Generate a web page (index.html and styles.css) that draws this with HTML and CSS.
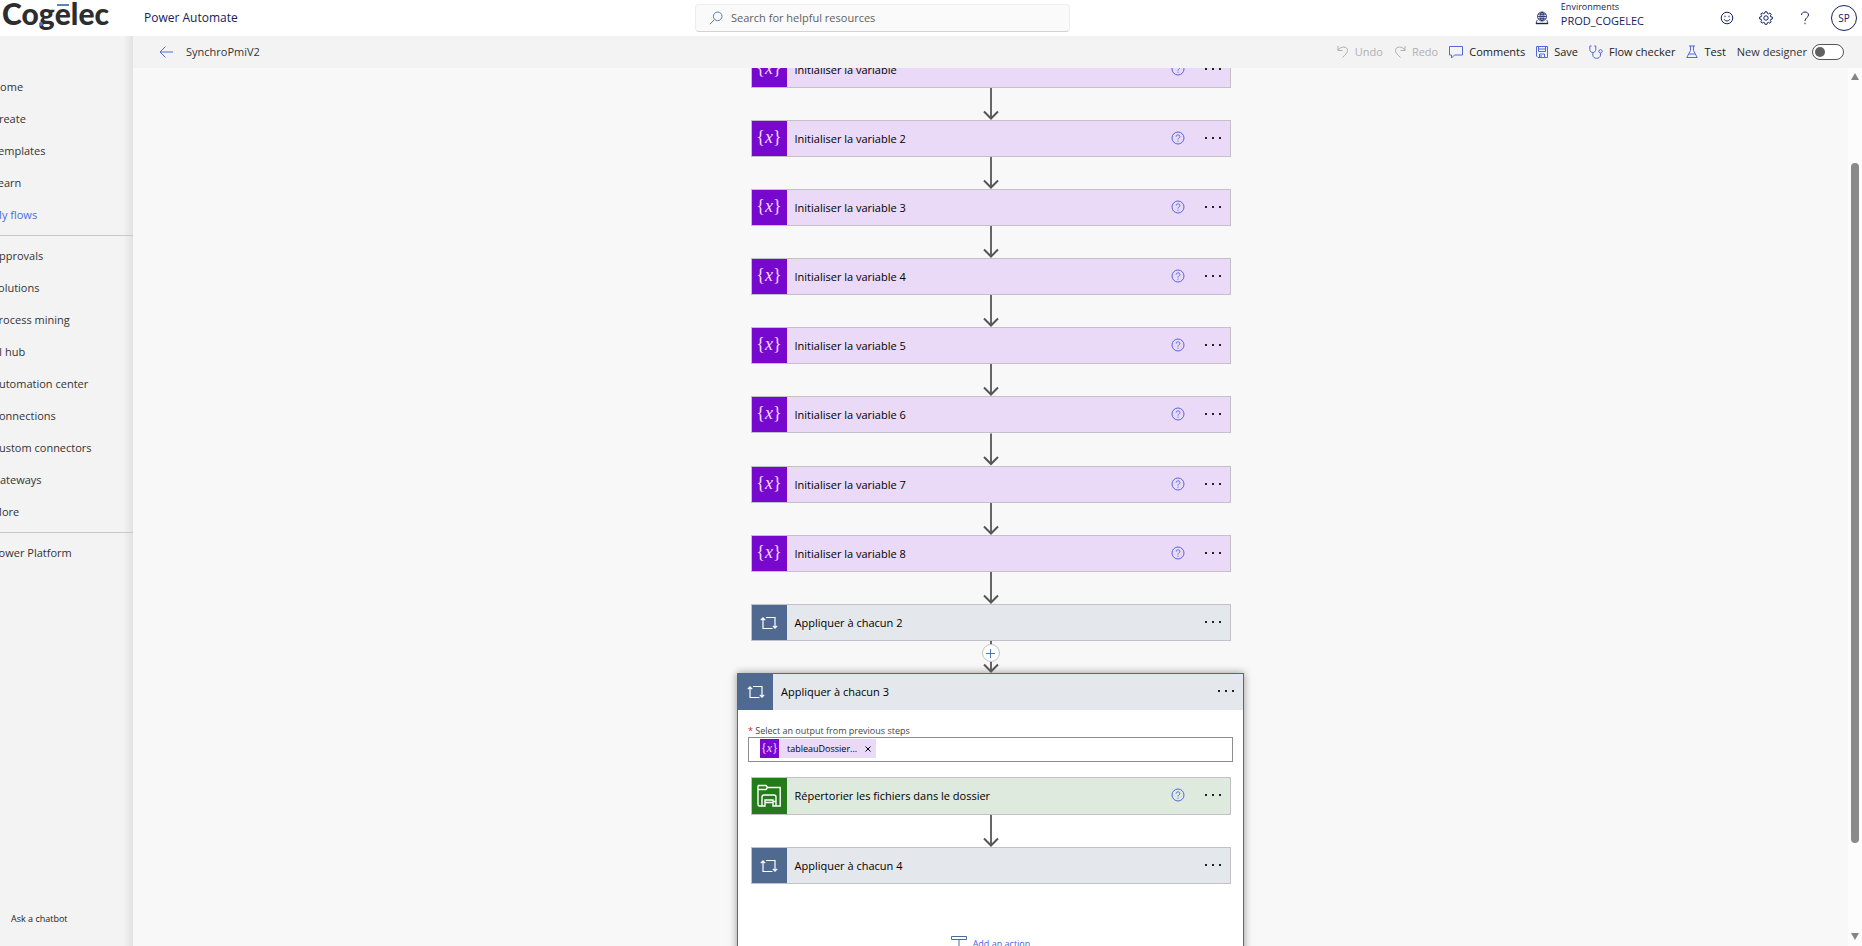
FILE: index.html
```html
<!DOCTYPE html>
<html lang="fr">
<head>
<meta charset="utf-8">
<title>SynchroPmiV2 | Power Automate</title>
<link rel="stylesheet" href="styles.css">
</head>
<body>
<svg class="sprite" aria-hidden="true">
  <symbol id="i-arrow" viewBox="0 0 16 32"><path d="M8 0V30" stroke="#666" stroke-width="2"/><path d="M1 23.500L8 30.500L15 23.500" fill="none" stroke="#555" stroke-width="2"/></symbol>
  <symbol id="i-help" viewBox="0 0 14 14"><circle cx="7" cy="7" r="6"/><path d="M5.200 5.600c0-2.400 3.700-2.300 3.700 0 0 1.200-1.900 1.300-1.900 2.900M7 9.700v1"/></symbol>
  <symbol id="i-dots" viewBox="0 0 18 4"><path d="M1 1h2v2H1zM8 1h2v2H8zM15 1h2v2h-2z"/></symbol>
  <symbol id="i-loop" viewBox="0 0 18 14"><path d="M3 2.500V12.500H12.500M6 1.500H15V12M.8 4.200L3 1.800L5.200 4.200M12.800 9.800L15 12.200L17.200 9.800"/></symbol>
</svg>

<header class="top">
  <div class="brand">
    <a class="logo" href="#" aria-label="Cogelec">Co<span class="logo-g">g</span><span class="logo-e">e</span>lec</a>
    <a class="product" href="#">Power Automate</a>
  </div>
  <label class="search">
    <svg width="14" height="14" viewBox="0 0 14 14"><path d="M5.200 8.800L1 13.200"/><circle cx="8.700" cy="5.300" r="4.300"/></svg>
    <input type="search" placeholder="Search for helpful resources" aria-label="Search for helpful resources">
  </label>
  <div class="account">
    <button class="env">
      <svg width="14" height="14" viewBox="0 0 14 14" stroke-width=".8"><circle cx="7" cy="5.500" r="4.500"/><ellipse cx="7" cy="5.500" rx="2" ry="4.500"/><path d="M2.500 5.500h9M7 1v9M3 3.200h8M3 7.800h8M2.200 9L1 12.500h12L11.800 9"/><path d="M1 12.500h12" stroke-width="1.400"/></svg>
      <span class="env-text"><span class="env-label">Environments</span><span>PROD_COGELEC</span></span>
    </button>
    <button class="round" aria-label="Feedback"><svg width="14" height="14" viewBox="0 0 14 14"><circle cx="7" cy="7" r="5.800"/><path d="M4.200 8.300c.8 2.200 4.800 2.200 5.600 0M5 4.700v1.500M9 4.700v1.500"/></svg></button>
    <button class="round" aria-label="Settings"><svg width="14" height="14" viewBox="0 0 14 14"><circle cx="7" cy="7" r="2.200"/><path d="M6 .8h2l.4 1.700 1 .4 1.500-.9 1.300 1.300-.9 1.500.4 1L13.300 6v2l-1.600.4-.4 1 .9 1.500-1.300 1.300-1.500-.9-1 .4L8 13.300H6l-.4-1.600-1-.4-1.500.9-1.300-1.300.9-1.500-.4-1L.7 8V6l1.600-.4.4-1-.9-1.500 1.300-1.300 1.500.9 1-.4z"/></svg></button>
    <button class="round" aria-label="Help"><svg width="10" height="14" viewBox="0 0 10 14"><path d="M1.500 4c0-4 7-4 7 0C8.500 6.500 5 6.700 5 10M5 11.800v1.400"/></svg></button>
    <button class="avatar">SP</button>
  </div>
</header>

<div class="shell">
  <aside class="side">
    <nav class="nav">
      <a href="#">Home</a><a href="#">Create</a><a href="#">Templates</a><a href="#">Learn</a><a href="#" class="on">My flows</a>
      <hr>
      <a href="#">Approvals</a><a href="#">Solutions</a><a href="#">Process mining</a><a href="#">AI hub</a><a href="#">Automation center</a><a href="#">Connections</a><a href="#">Custom connectors</a><a href="#">Gateways</a><a href="#">More</a>
      <hr>
      <a href="#">Power Platform</a>
    </nav>
    <button class="chatbot">Ask a chatbot</button>
  </aside>

  <main class="main">
    <div class="bar">
      <button class="back" aria-label="Back"><svg width="14" height="12" viewBox="0 0 14 12"><path d="M14 6H1M6.500 .5L1 6l5.500 5.500"/></svg></button>
      <h1 class="flow-name">SynchroPmiV2</h1>
      <div class="tools">
        <button disabled><svg width="12" height="14" viewBox="0 0 12 14"><path d="M1 1v4.500h4.500M1 5.500C3 1 10.500.8 10.500 5.500 10.500 8 8 10 5.500 12.500"/></svg>Undo</button>
        <button disabled><svg width="12" height="14" viewBox="0 0 12 14"><path d="M11 1v4.500H6.500M11 5.500C9 1 1.500.8 1.500 5.500 1.500 8 4 10 6.500 12.500"/></svg>Redo</button>
        <button><svg width="14" height="14" viewBox="0 0 14 14"><path d="M.5 1.500h13v8.500H5.500L2.500 13v-3h-2z"/></svg>Comments</button>
        <button><svg width="12" height="14" viewBox="0 0 12 14"><path d="M.5 1.500h11v11H2L.5 11zM2.500 1.500v5h7v-5M3.500 12.500V9h5v3.500M5 10v2.500M2.500 4h7"/></svg>Save</button>
        <button><svg width="14" height="14" viewBox="0 0 14 14"><path d="M2.500 1H.8v3.500c0 4 6 4 6 0V1H5.200M3.800 7.500v2.500c0 4.500 7.700 4.300 7.700 0V8"/><circle cx="11.500" cy="6.300" r="1.700"/></svg>Flow checker</button>
        <button><svg width="12" height="14" viewBox="0 0 12 14"><path d="M3 1h6M4.500 1v4.500L.8 12.500h10.400L7.500 5.500V1M2.800 9h6.400"/></svg>Test</button>
        <label class="switch">New designer<input type="checkbox" role="switch"></label>
      </div>
    </div>

    <div class="stage">
      <div class="canvas">
        <div class="flow">
          <article class="card var first"><span class="tile">{<i>x</i>}</span><h2>Initialiser la variable</h2><button class="help" aria-label="Help"><svg><use href="#i-help"/></svg></button><button class="more" aria-label="Menu"><svg><use href="#i-dots"/></svg></button></article>
          <svg class="link"><use href="#i-arrow"/></svg>
          <article class="card var"><span class="tile">{<i>x</i>}</span><h2>Initialiser la variable 2</h2><button class="help" aria-label="Help"><svg><use href="#i-help"/></svg></button><button class="more" aria-label="Menu"><svg><use href="#i-dots"/></svg></button></article>
          <svg class="link"><use href="#i-arrow"/></svg>
          <article class="card var"><span class="tile">{<i>x</i>}</span><h2>Initialiser la variable 3</h2><button class="help" aria-label="Help"><svg><use href="#i-help"/></svg></button><button class="more" aria-label="Menu"><svg><use href="#i-dots"/></svg></button></article>
          <svg class="link"><use href="#i-arrow"/></svg>
          <article class="card var"><span class="tile">{<i>x</i>}</span><h2>Initialiser la variable 4</h2><button class="help" aria-label="Help"><svg><use href="#i-help"/></svg></button><button class="more" aria-label="Menu"><svg><use href="#i-dots"/></svg></button></article>
          <svg class="link"><use href="#i-arrow"/></svg>
          <article class="card var"><span class="tile">{<i>x</i>}</span><h2>Initialiser la variable 5</h2><button class="help" aria-label="Help"><svg><use href="#i-help"/></svg></button><button class="more" aria-label="Menu"><svg><use href="#i-dots"/></svg></button></article>
          <svg class="link"><use href="#i-arrow"/></svg>
          <article class="card var"><span class="tile">{<i>x</i>}</span><h2>Initialiser la variable 6</h2><button class="help" aria-label="Help"><svg><use href="#i-help"/></svg></button><button class="more" aria-label="Menu"><svg><use href="#i-dots"/></svg></button></article>
          <svg class="link tall"><use href="#i-arrow"/></svg>
          <article class="card var"><span class="tile">{<i>x</i>}</span><h2>Initialiser la variable 7</h2><button class="help" aria-label="Help"><svg><use href="#i-help"/></svg></button><button class="more" aria-label="Menu"><svg><use href="#i-dots"/></svg></button></article>
          <svg class="link"><use href="#i-arrow"/></svg>
          <article class="card var"><span class="tile">{<i>x</i>}</span><h2>Initialiser la variable 8</h2><button class="help" aria-label="Help"><svg><use href="#i-help"/></svg></button><button class="more" aria-label="Menu"><svg><use href="#i-dots"/></svg></button></article>
          <svg class="link"><use href="#i-arrow"/></svg>
          <article class="card loop"><span class="tile"><svg><use href="#i-loop"/></svg></span><h2>Appliquer à chacun 2</h2><button class="more" aria-label="Menu"><svg><use href="#i-dots"/></svg></button></article>
          <div class="insert">
            <svg class="link"><use href="#i-arrow"/></svg>
            <button class="plus" aria-label="Insert a step"><svg width="9" height="9" viewBox="0 0 9 9"><path d="M4.500 0v9M0 4.500h9"/></svg></button>
          </div>
          <section class="scope">
            <header class="scope-head loop"><span class="tile"><svg><use href="#i-loop"/></svg></span><h2>Appliquer à chacun 3</h2><button class="more" aria-label="Menu"><svg><use href="#i-dots"/></svg></button></header>
            <div class="scope-body">
              <label class="field-label" for="output"><span class="req">*</span> Select an output from previous steps</label>
              <div class="field">
                <span class="token"><span class="tile mini">{<i>x</i>}</span><span class="token-name">tableauDossier...</span><button class="remove" aria-label="Remove"><svg width="6" height="6" viewBox="0 0 6 6"><path d="M.5 .5l5 5M5.500 .5l-5 5"/></svg></button></span>
                <input id="output" type="text">
              </div>
              <div class="steps">
                <article class="card files"><span class="tile"><svg viewBox="0 0 24 24"><path d="M1 1.500h8l1.500 2H23.200V22H19v-4.500H16.500M1 1.500V20.500q0 1.500 1.500 1.500H5M1 5.500h8l1.500-2M5 22v-9q0-2 2-2h10q2 0 2 2v9M5 22H8v-6h8v6h3M8 18.500h8"/></svg></span><h2>Répertorier les fichiers dans le dossier</h2><button class="help" aria-label="Help"><svg><use href="#i-help"/></svg></button><button class="more" aria-label="Menu"><svg><use href="#i-dots"/></svg></button></article>
                <svg class="link"><use href="#i-arrow"/></svg>
                <article class="card loop"><span class="tile"><svg><use href="#i-loop"/></svg></span><h2>Appliquer à chacun 4</h2><button class="more" aria-label="Menu"><svg><use href="#i-dots"/></svg></button></article>
                <button class="add"><svg width="16" height="16" viewBox="0 0 16 16"><path d="M.5 .5h15v3H.5zM8 3.500V15M5 12l3 3 3-3"/></svg>Add an action</button>
              </div>
            </div>
          </section>
        </div>
      </div>
      <div class="scroll" aria-hidden="true">
        <svg width="8" height="7" viewBox="0 0 8 7"><path d="M4 0L8 7H0z"/></svg>
        <div class="track"><div class="thumb"></div></div>
        <svg width="8" height="7" viewBox="0 0 8 7"><path d="M4 7L8 0H0z"/></svg>
      </div>
    </div>
  </main>
</div>
</body>
</html>
```
FILE: styles.css
```css
* { box-sizing: border-box; }
html, body { height: 100%; }
body {
  margin: 0;
  display: flex;
  flex-direction: column;
  overflow: hidden;
  background: #fff;
  color: #222;
  font: 11px/16px "Open Sans", "Noto Sans", sans-serif;
}
button, input { font: inherit; color: inherit; }
button { border: 0; padding: 0; background: none; cursor: pointer; }
a { color: inherit; text-decoration: none; }
h1, h2 { margin: 0; font: inherit; }
svg { display: block; flex: none; fill: none; stroke: currentColor; }
.sprite { position: absolute; width: 0; height: 0; }

/* Top bar */
.top {
  flex: none;
  height: 36px;
  display: grid;
  grid-template-columns: 695fr 375fr 792fr;
  align-items: center;
  color: #15225f;
}
.brand { display: flex; align-items: center; height: 36px; }
.logo {
  width: 133px;
  padding-left: 2px;
  color: #2d2d2f;
  font: 900 30px/26px Lato, sans-serif;
  height: 36px;
}
.logo-e, .logo-g { position: relative; }
.logo-e::before {
  content: "";
  position: absolute;
  left: 2px;
  top: 9px;
  width: 12px;
  height: 2px;
  background: #5b85b8;
}
.logo-g::before {
  content: "";
  position: absolute;
  left: 0;
  top: 27px;
  width: 4px;
  height: 4px;
  border-radius: 50%;
  background: #4a78b8;
}
.product { padding-left: 11px; font-size: 12px; font-weight: 500; }
.search {
  display: flex;
  align-items: center;
  gap: 8px;
  height: 28px;
  padding: 0 13px;
  border: 1px solid #ededed;
  border-bottom-color: #d2d2d2;
  border-radius: 4px;
  background: #fafafa;
}
.search svg { color: #5379b0; }
.search input { flex: 1; min-width: 0; border: 0; padding: 0; background: none; outline: 0; }
.search input::placeholder { color: #616161; opacity: 1; }
.account { display: flex; justify-content: flex-end; align-items: center; padding-right: 5px; }
.env { display: flex; align-items: center; gap: 12px; margin-right: 70px; text-align: left; }
.env-text { display: flex; flex-direction: column; line-height: 14px; padding-bottom: 8px; }
.env-label { font-size: 9px; }
.round { display: flex; justify-content: center; width: 26px; margin-right: 13px; }
.avatar { width: 26px; height: 26px; border: 1px solid #15225f; border-radius: 50%; font-size: 10px; }

/* Left navigation */
.shell { flex: 1; min-height: 0; display: flex; }
.side {
  flex: none;
  width: 133px;
  display: flex;
  flex-direction: column;
  justify-content: space-between;
  overflow: hidden;
  padding: 35px 0 19px;
  background: linear-gradient(to left, #e2e2e2, #f3f3f3 10px);
}
.nav { display: flex; flex-direction: column; }
.nav a { height: 32px; line-height: 31px; margin-left: -8px; color: #333; white-space: nowrap; }
.nav .on { color: #4a6be0; }
.nav hr { width: 100%; height: 1px; margin: 4px 0; border: 0; background: #c8c8c8; }
.chatbot { align-self: flex-start; padding-left: 11px; font-size: 9px; color: #222; }

/* Command bar */
.main { flex: 1; min-width: 0; display: flex; flex-direction: column; }
.bar { flex: none; height: 32px; display: flex; align-items: center; padding: 0 18px 0 26px; background: #f3f3f3; }
.back { color: #5468dc; }
.flow-name { margin-left: 13px; color: #333; }
.tools { margin-left: auto; display: flex; align-items: center; gap: 11px; }
.tools button { display: flex; align-items: center; gap: 6px; }
.tools button svg { color: #5468dc; }
.tools button:disabled, .tools button:disabled svg { color: #b0b0b0; }
.switch { display: flex; align-items: center; gap: 5px; color: #333; }
.switch input {
  appearance: none;
  display: flex;
  align-items: center;
  width: 32px;
  height: 16px;
  margin: 0;
  padding-left: 2px;
  border: 1px solid #555;
  border-radius: 8px;
  background: #fff;
}
.switch input::before { content: ""; width: 10px; height: 10px; border-radius: 50%; background: #616161; }
.switch input:checked::before { margin-left: 16px; }

/* Designer canvas */
.stage { flex: 1; min-height: 0; display: flex; background: #f8f8f8; }
.canvas { flex: 1; min-width: 0; overflow: hidden; }
.flow, .steps { display: flex; flex-direction: column; align-items: center; }
.first { margin-top: -17px; }
.card {
  display: flex;
  align-items: center;
  flex: none;
  width: 480px;
  height: 37px;
  border: 1px solid #c4c0c8;
  color: #000;
}
.tile {
  flex: none;
  display: flex;
  align-items: center;
  justify-content: center;
  width: 35px;
  height: 100%;
  color: #fff;
  font: 18px/32px "Liberation Serif", serif;
}
.card h2, .scope-head h2 { flex: 1; padding-left: 8px; }
.var { background: #ead9f7; }
.var .tile, .mini { background: #7709cf; color: #f0dcff; }
.var .tile { padding-bottom: 3px; }
.loop { background: #e4e7ec; }
.loop .tile { background: #4f6990; }
.loop .tile svg { width: 18px; height: 14px; stroke-width: 1.2; }
.files { background: #deeadd; height: 38px; }
.files .tile { background: #257a1b; }
.files .tile svg { width: 24px; height: 24px; stroke-width: 1.4; }
.help { color: #5468dc; margin-right: 19px; padding-bottom: 2px; }
.help svg { width: 14px; height: 14px; }
.more { color: #222; margin-right: 8px; padding-bottom: 2px; }
.more svg { width: 18px; height: 4px; fill: currentColor; stroke: none; }
.link { width: 16px; height: 32px; stroke: none; }
.link.tall { height: 33px; }
.insert { position: relative; }
.plus {
  position: absolute;
  left: -1px;
  top: 3px;
  width: 18px;
  height: 18px;
  display: flex;
  align-items: center;
  justify-content: center;
  border: 1px solid #c4c4c4;
  border-radius: 50%;
  background: #fff;
  color: #4b78b5;
}

/* Expanded loop */
.scope {
  width: 507px;
  min-height: 320px;
  border: 1px solid #4f6990;
  background: #fff;
  box-shadow: 0 0 8px rgba(0, 0, 0, .4);
}
.scope-head { display: flex; align-items: center; height: 36px; color: #000; }
.scope-body { padding: 15px 10px 0; }
.field-label { display: block; font-size: 9px; line-height: 12px; color: #444; }
.req { color: #c4262e; }
.field { display: flex; align-items: center; height: 25px; padding-left: 11px; border: 1px solid #8a8f8a; }
.field input { flex: 1; min-width: 0; border: 0; outline: 0; background: none; }
.token { display: flex; align-items: center; height: 19px; margin-bottom: 2px; background: #ead9f7; color: #000; font-size: 9px; }
.mini { width: 19px; font-size: 12px; line-height: 19px; }
.token-name { padding: 0 8px; }
.remove { padding-right: 5px; }
.steps { padding-top: 15px; }
.add { display: flex; align-items: center; gap: 6px; margin-top: 52px; font-size: 9px; color: #4763d8; }
.add svg { color: #4a6c9c; }

/* Scrollbar */
.scroll { flex: none; width: 14px; display: flex; flex-direction: column; align-items: center; padding: 5px 0 6px; background: #fcfcfc; }
.scroll svg { fill: #858585; stroke: none; }
.track { flex: 1; width: 8px; padding: 83px 0 90px; }
.thumb { height: 100%; border-radius: 4px; background: #8a8a8a; }
```
